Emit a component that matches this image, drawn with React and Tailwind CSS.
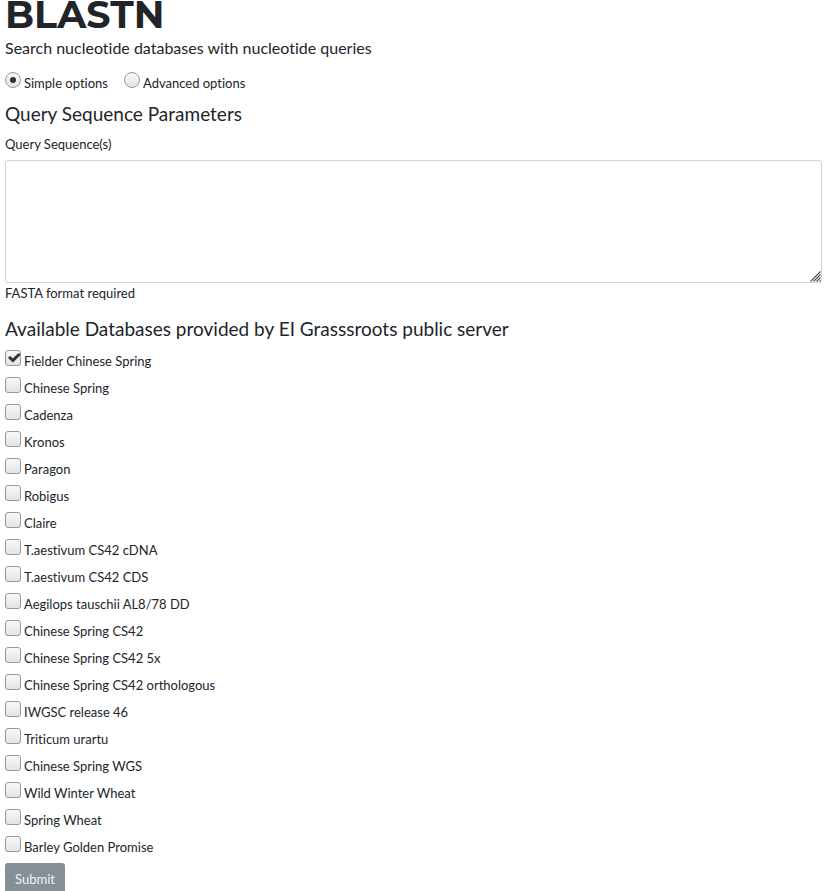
import { useState } from "react";

const databases = [
  "Fielder Chinese Spring",
  "Chinese Spring",
  "Cadenza",
  "Kronos",
  "Paragon",
  "Robigus",
  "Claire",
  "T.aestivum CS42 cDNA",
  "T.aestivum CS42 CDS",
  "Aegilops tauschii AL8/78 DD",
  "Chinese Spring CS42",
  "Chinese Spring CS42 5x",
  "Chinese Spring CS42 orthologous",
  "IWGSC release 46",
  "Triticum urartu",
  "Chinese Spring WGS",
  "Wild Winter Wheat",
  "Spring Wheat",
  "Barley Golden Promise",
];

const controlStyle =
  "col-start-1 row-start-1 size-4 appearance-none border border-[#989898] bg-linear-to-b from-[#f8f8f8] to-[#e4e4e4]";

function Radio({ id, label, checked, onChange }) {
  return (
    <div className="flex gap-[3px]">
      <span className="grid size-4 place-items-center">
        <input
          id={id}
          type="radio"
          name="options"
          checked={checked}
          onChange={onChange}
          className={controlStyle + " rounded-full"}
        />
        {checked && (
          <span className="pointer-events-none z-10 col-start-1 row-start-1 size-1.5 rounded-full bg-[#2e3436]" />
        )}
      </span>
      <label htmlFor={id} className="pt-px leading-5">
        {label}
      </label>
    </div>
  );
}

function Database({ id, label, initial }) {
  const [checked, setChecked] = useState(initial);
  return (
    <li className="flex h-[27px] gap-[3px]">
      <span className="grid size-4 place-items-center">
        <input
          id={id}
          type="checkbox"
          checked={checked}
          onChange={() => setChecked(!checked)}
          className={controlStyle + " rounded-[3px]"}
        />
        {checked && (
          <svg
            viewBox="0 0 16 16"
            className="pointer-events-none z-10 col-start-1 row-start-1 size-4"
            aria-hidden="true"
          >
            <path d="M3.5 6.5 5.8 6.5 7.8 8.5 13.3 3.2 15 3.4 15 5.4 8 12.4 3.5 8.6Z" fill="#2e3436" />
          </svg>
        )}
      </span>
      <label htmlFor={id} className="pt-px leading-5">
        {label}
      </label>
    </li>
  );
}

export default function App() {
  const [mode, setMode] = useState("simple");
  return (
    <main className="bg-white pr-2 pl-[5px] font-['Lato',sans-serif] text-[13px] leading-5 text-[#212529] [font-variant-ligatures:none]">
      <h1 className="font-['Montserrat','Inter',sans-serif] text-[38px] leading-[30px] font-bold">
        BLASTN
      </h1>
      <p className="mt-2 text-base leading-5">Search nucleotide databases with nucleotide queries</p>
      <form onSubmit={(e) => e.preventDefault()}>
        <div className="mt-3.5 flex gap-4">
          <Radio
            id="simple"
            label="Simple options"
            checked={mode === "simple"}
            onChange={() => setMode("simple")}
          />
          <Radio
            id="advanced"
            label="Advanced options"
            checked={mode === "advanced"}
            onChange={() => setMode("advanced")}
          />
        </div>
        <h2 className="mt-[9px] text-[19px] leading-6">Query Sequence Parameters</h2>
        <label htmlFor="query" className="mt-2 block">
          Query Sequence(s)
        </label>
        <div className="relative mt-1.5">
          <textarea
            id="query"
            className="block h-[123px] w-full rounded-[3px] border border-[#d3d3d3] bg-white px-3 py-1.5 outline-none [&::-webkit-resizer]:hidden"
          />
          <svg
            viewBox="0 0 11 11"
            className="pointer-events-none absolute right-px bottom-px size-[11px]"
            stroke="#555555"
            strokeWidth="1.1"
            aria-hidden="true"
          >
            <path d="M0.5 10.5 10.5 0.5M3.5 10.5 10.5 3.5M6.5 10.5 10.5 6.5M9.5 10.5 10.5 9.5" />
          </svg>
        </div>
        <p>FASTA format required</p>
        <h2 className="mt-3.5 text-[19px] leading-6">
          Available Databases provided by EI Grasssroots public server
        </h2>
        <ul className="mt-[9px]">
          {databases.map((name, i) => (
            <Database key={name} id={"db-" + i} label={name} initial={i === 0} />
          ))}
        </ul>
        <button
          type="submit"
          className="block h-8 rounded-[3px] bg-[#868e96] px-2.5 text-[13px] text-[#f1f2f3]"
        >
          Submit
        </button>
      </form>
    </main>
  );
}
